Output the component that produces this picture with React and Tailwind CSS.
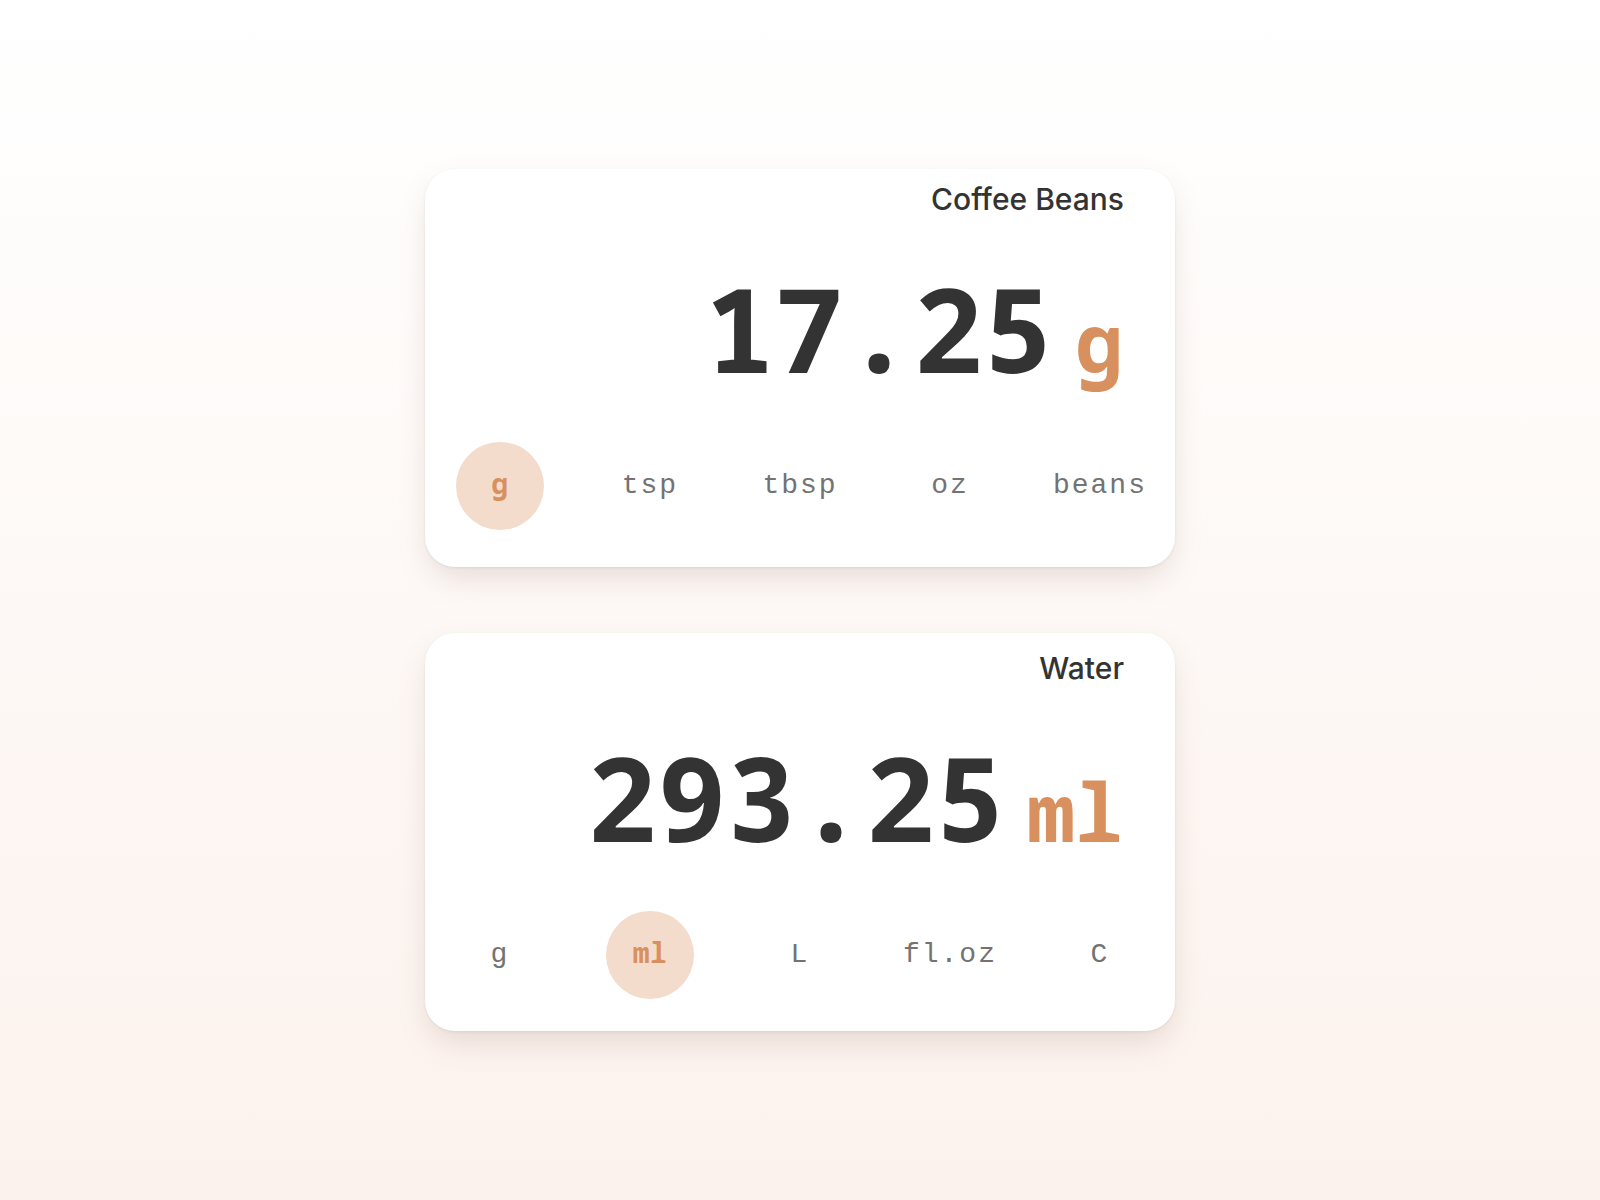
import React from "react";

const cards = [
  { title: "Coffee Beans", value: "17.25", unit: "g", units: ["g", "tsp", "tbsp", "oz", "beans"], active: 0, top: "pt-[15px]" },
  { title: "Water", value: "293.25", unit: "ml", units: ["g", "ml", "L", "fl.oz", "C"], active: 1, top: "pt-[20px]" },
];

function Card({ title, value, unit, units, active, top }) {
  return (
    <div className="w-[750px] h-[398px] bg-white rounded-[30px] shadow-[0_14px_32px_-6px_rgba(140,100,80,0.22),0_1px_3px_rgba(0,0,0,0.07)] flex flex-col">
      <div className={top + " pr-[51px] flex justify-end"}>
        <div className="text-[30px] leading-none font-medium text-[#333333] font-['Inter',sans-serif]">{title}</div>
      </div>
      <div className="mt-[56px] pr-[52px] flex justify-end items-end gap-[22px]">
        <div className="text-[116px] leading-none font-bold text-[#333333] font-['Noto_Sans_Mono','Liberation_Mono',monospace]">{value}</div>
        <div className="-mb-[6px] text-[80px] leading-[100px] font-bold text-[#d8915e] font-['Noto_Sans_Mono','DejaVu_Sans_Mono',monospace]">{unit}</div>
      </div>
      <div className="mt-[56px] grid grid-cols-5">
        {units.map((u, i) => (
          <div key={u} className="flex justify-center">
            {i === active ? (
              <div className="w-[88px] h-[88px] pb-[6px] rounded-full bg-[#f4dccc] flex items-center justify-center text-[28px] tracking-[0.02em] font-bold text-[#d8915e] font-['Noto_Sans_Mono','DejaVu_Sans_Mono',monospace]">
                {u}
              </div>
            ) : (
              <div className="h-[88px] flex items-center text-[28px] tracking-[0.07em] text-[#737373] font-['Liberation_Mono',monospace]">
                {u}
              </div>
            )}
          </div>
        ))}
      </div>
    </div>
  );
}

export default function App() {
  return (
    <div className="min-h-screen w-full bg-linear-to-b from-white to-[#fcf2ed] flex flex-col items-center justify-center gap-[66px]">
      {cards.map((c) => (
        <Card key={c.title} {...c} />
      ))}
    </div>
  );
}
